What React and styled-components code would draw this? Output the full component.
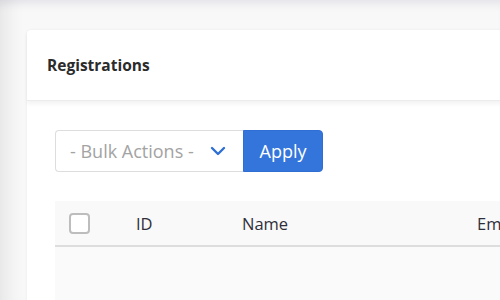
import React from 'react';
import styled, { createGlobalStyle } from 'styled-components';

const GlobalStyle = createGlobalStyle`
  html, body {
    margin: 0;
    padding: 0;
    height: 100%;
    overflow: hidden;
  }
  body {
    font-family: 'Open Sans', 'Noto Sans', sans-serif;
    background-color: #f7f7f7;
    color: #333;
  }
  #root {
    height: 100%;
  }
`;

const COLUMNS = [
  { name: 'ID', width: 106 },
  { name: 'Name', width: 235 },
  { name: 'Email', width: 200 },
];

const Main = styled.main`
  height: 100%;
  padding: 30px 0 0 27px;
  box-sizing: border-box;
  overflow: hidden;
  background-color: #f8f8f8;
  box-shadow: inset 22px 0 18px -14px rgba(0, 0, 0, 0.07),
    inset 0 10px 8px -6px rgba(60, 60, 110, 0.1);
`;

const Card = styled.section`
  width: 660px;
  min-height: 400px;
  background-color: #fff;
  border-radius: 4px 0 0 0;
  box-shadow: 0 0 3px rgba(0, 0, 0, 0.06);
`;

const CardHeader = styled.header`
  display: flex;
  align-items: center;
  height: 70px;
  padding: 0 20px;
  border-bottom: 1px solid #ececec;
  box-shadow: 0 3px 4px rgba(0, 0, 0, 0.05);
`;

const CardTitle = styled.h2`
  margin: 0;
  font-size: 15.5px;
  font-weight: 700;
  color: #2b2b2b;
`;

const CardBody = styled.div`
  padding: 29px 28px;
`;

const Toolbar = styled.div`
  display: flex;
  margin-bottom: 29px;
`;

const Select = styled.div`
  display: flex;
  align-items: center;
  justify-content: space-between;
  width: 188px;
  height: 42px;
  padding: 0 17px 0 14px;
  box-sizing: border-box;
  border: 1px solid #ddd;
  border-right: none;
  border-radius: 4px 0 0 4px;
  color: #a3a3a3;
  font-size: 18px;
  white-space: nowrap;
`;

const ApplyButton = styled.button`
  width: 80px;
  height: 42px;
  border: 1px solid #2f6fd4;
  border-radius: 0 4px 4px 0;
  background-color: #3475dc;
  color: #fff;
  font-family: inherit;
  font-size: 18px;
  cursor: pointer;
`;

const Table = styled.table`
  width: 622px;
  border-collapse: collapse;
  table-layout: fixed;
  background-color: #fafafa;
  border-radius: 4px 0 0 0;
`;

const HeadCell = styled.th`
  height: 44px;
  padding: 0;
  text-align: left;
  font-size: 16.5px;
  font-weight: 500;
  color: #2f2f3a;
  border-bottom: 2px solid #ddd;
  background-color: #f9f9f9;
  white-space: nowrap;
`;

const CheckCell = styled(HeadCell)`
  width: 81px;
  padding-left: 14px;
  box-sizing: border-box;
`;

const Checkbox = styled.span`
  display: block;
  width: 21px;
  height: 21px;
  box-sizing: border-box;
  border: 2px solid #bdbdbd;
  border-radius: 4px;
  background-color: #fff;
`;

const BodyCell = styled.td`
  height: 120px;
`;

const Chevron = () => (
  <svg width="16" height="10" viewBox="0 0 16 10" fill="none">
    <path d="M2 2l6 6 6-6" stroke="#2f6fd4" strokeWidth="2.4" strokeLinecap="round" strokeLinejoin="round" />
  </svg>
);

export default () => (
  <>
    <GlobalStyle />
    <Main>
      <Card>
        <CardHeader>
          <CardTitle>Registrations</CardTitle>
        </CardHeader>
        <CardBody>
          <Toolbar>
            <Select>
              <span>- Bulk Actions -</span>
              <Chevron />
            </Select>
            <ApplyButton>Apply</ApplyButton>
          </Toolbar>
          <Table>
            <thead>
              <tr>
                <CheckCell>
                  <Checkbox />
                </CheckCell>
                {COLUMNS.map((col) => (
                  <HeadCell key={col.name} style={{ width: col.width }}>
                    {col.name}
                  </HeadCell>
                ))}
              </tr>
            </thead>
            <tbody>
              <tr>
                <BodyCell colSpan={4} />
              </tr>
            </tbody>
          </Table>
        </CardBody>
      </Card>
    </Main>
  </>
);
